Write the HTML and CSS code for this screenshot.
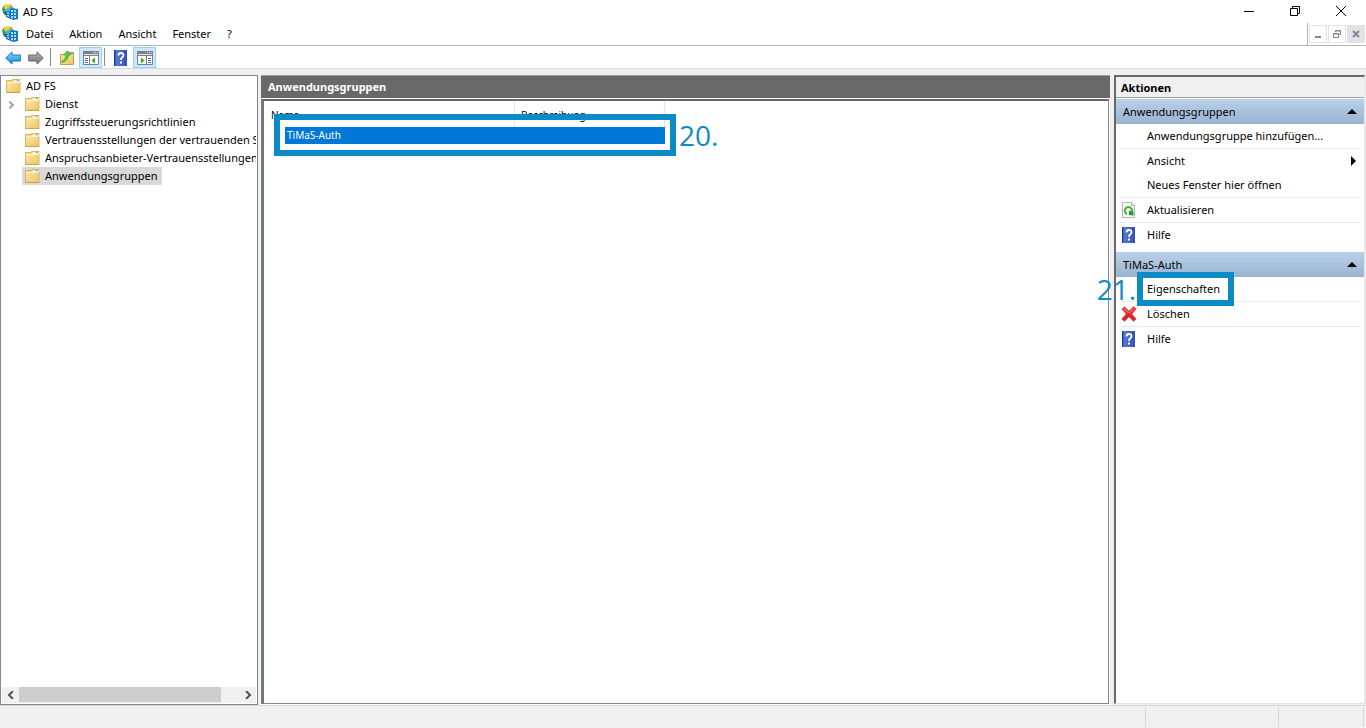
FILE: index.html
```html
<!DOCTYPE html>
<html lang="de">
<head>
    <meta charset="UTF-8">
    <meta name="viewport" content="width=device-width, initial-scale=1.0">
    <title>AD FS</title>
    <link rel="stylesheet" href="styles.css">
</head>
<body>

    <!-- Icons -->
    <svg class="sprite" aria-hidden="true">
        <defs>
            <linearGradient id="gFolder" x1="0" y1="0" x2="1" y2="1">
                <stop offset="0" stop-color="#ffebab"/>
                <stop offset="1" stop-color="#ebc566"/>
            </linearGradient>
            <linearGradient id="gBook" x1="0" y1="0" x2="1" y2="0">
                <stop offset="0" stop-color="#24449c"/>
                <stop offset="0.2" stop-color="#5478d8"/>
                <stop offset="1" stop-color="#2e50b4"/>
            </linearGradient>
            <linearGradient id="gBlue" x1="0" y1="0" x2="0" y2="1">
                <stop offset="0" stop-color="#8bdcff"/>
                <stop offset="1" stop-color="#0c84dc"/>
            </linearGradient>
            <linearGradient id="gGray" x1="0" y1="0" x2="0" y2="1">
                <stop offset="0" stop-color="#b4b4b4"/>
                <stop offset="1" stop-color="#747474"/>
            </linearGradient>
        </defs>
        <symbol id="adfs" viewBox="0 0 16 16">
            <circle cx="6" cy="6" r="5.500" fill="#4fb4e4"/>
            <path d="M0 5Q1 1 5 .5L6 3 4 5 4 8 1 8Z" fill="#3f9e46"/>
            <path d="M2.500 1.500Q5-.3 8 .6L8 3 5 4 4 6 2 4Z" fill="#f8cf3a"/>
            <path d="M1 8l3 0 2 4-2-.5Q1.500 10 1 8Z" fill="#12609e"/>
            <path d="M8 .6l2 1 1.500 3-3-1.500Z" fill="#e88a2c"/>
            <path d="M4 8l4-1V5l2-1 6 1v10l-5 1-7-3Z" fill="#1778be"/>
            <path d="M5 9l2-.5V13L5 12ZM9 6h2v2H9ZM12 6h2v2h-2ZM9 9h2v2H9ZM12 9h2v2h-2ZM9 12h2v2.500L9 14ZM12 12h2v2h-2Z" fill="#a4e2fb"/>
            <path d="M5 10.500h3" stroke="#1778be"/>
        </symbol>
        <symbol id="folder" viewBox="0 0 14 13">
            <path d="M.5 2V1.500h5L6.500.5h6.500v12H.5Z" fill="url(#gFolder)" stroke="#dcb562"/>
            <path d="M7 3.500h6V1H8Z" fill="#fff6d6"/>
            <path d="M10 1.500h2" stroke="#4aa6e8" fill="none"/>
            <path d="M1 3.500h6.500l1-1" stroke="#fff3c4" fill="none"/>
            <path d="M1 12.500h12" stroke="#cba24b"/>
        </symbol>
        <symbol id="back" viewBox="0 0 16 14">
            <path d="M.7 7L7 .9V4h8.300v6H7v3.100Z" fill="url(#gBlue)" stroke="#1873b8"/>
        </symbol>
        <symbol id="forward" viewBox="0 0 16 14">
            <path d="M15.300 7L9 .9V4H.7v6H9v3.100Z" fill="url(#gGray)" stroke="#686868"/>
        </symbol>
        <symbol id="up" viewBox="0 0 16 16">
            <path d="M1.500 4.500h5l1-2h7v12h-13Z" fill="url(#gFolder)" stroke="#c89d45"/>
            <path d="M11 3.500h3" stroke="#4aa6e8"/>
            <path d="M3 11Q7 10 7 5H4.500L8.500.8 12 5H9.500Q9 11 3 12.500Z" fill="#55cf3c" stroke="#2c9c25" stroke-width=".6"/>
        </symbol>
        <symbol id="paneleft" viewBox="0 0 16 14">
            <path d="M.5.5h15v13H.5Z" fill="#fff" stroke="#7d8086"/>
            <path d="M0 0h16v5H0Z" fill="#7d8086"/>
            <path d="M1 3.500h14M10 1.500h1M12 1.500h1M14 1.500h1" stroke="#e4e6e8"/>
            <path d="M6.500 5v9" stroke="#7d8086"/>
            <path d="M2 7.500h3M2 9.500h3M2 11.500h3" stroke="#3c6db4"/>
            <path d="M12 6.500v6L8.500 9.500Z" fill="#35ac2c"/>
        </symbol>
        <symbol id="paneright" viewBox="0 0 16 14">
            <path d="M.5.5h15v13H.5Z" fill="#fff" stroke="#7d8086"/>
            <path d="M0 0h16v5H0Z" fill="#7d8086"/>
            <path d="M1 3.500h14M10 1.500h1M12 1.500h1M14 1.500h1" stroke="#e4e6e8"/>
            <path d="M9.500 5v9" stroke="#7d8086"/>
            <path d="M11 7.500h3M11 9.500h3M11 11.500h3" stroke="#3c6db4"/>
            <path d="M4 6.500v6L7.500 9.500Z" fill="#35ac2c"/>
        </symbol>
        <symbol id="help" viewBox="0 0 13 16">
            <path d="M0 0h13v16H0Z" fill="url(#gBook)"/>
            <path d="M.5 0v16" stroke="#1c3a8c"/>
            <path d="M4.500 5.500Q4.500 3 7 3t2.500 2.200Q9.500 6.500 8 7.500 7 8.200 7 10" fill="none" stroke="#fff" stroke-width="1.800"/>
            <path d="M6 11.500h2v2H6Z" fill="#fff"/>
        </symbol>
        <symbol id="refresh" viewBox="0 0 13 16">
            <path d="M.5.5h9l3 3v12H.5Z" fill="#fafafa" stroke="#b4b4b4"/>
            <path d="M9.500.5v3h3" fill="#e2e2e2" stroke="#b4b4b4"/>
            <path d="M5 12.200A3.700 3.700 0 1 1 10 10" fill="none" stroke="#3cb031" stroke-width="2"/>
            <path d="M7 8.500L11.500 10V13.500L7 13Z" fill="#249b20"/>
        </symbol>
        <symbol id="delete" viewBox="0 0 16 16">
            <path d="M1 3L3.500.8 8 5.200 12.500.8 15.200 3 10.700 8 15.200 13 12.500 15.200 8 10.800 3.500 15.200.8 13 5.300 8Z" fill="#de2a2e" stroke="#b9181e" stroke-width=".6"/>
            <path d="M2 3l1.500-1.200L8 6.200l4.500-4.400L14 3 9.500 7h-3Z" fill="#ee6467"/>
        </symbol>
    </svg>

    <div class="window">
        <header class="titlebar">
            <svg class="icon16"><use href="#adfs"/></svg>
            <span class="title">AD FS</span>
            <button class="winbtn" aria-label="Minimieren"><svg width="12" height="12"><path d="M1 6.500h10" /></svg></button>
            <button class="winbtn" aria-label="Verkleinern"><svg width="12" height="12"><path d="M1.500 3.500h7v7h-7ZM3.500 3V1.500h7v7H9" /></svg></button>
            <button class="winbtn" aria-label="Schließen"><svg width="12" height="12"><path d="M1 1l10 10M11 1L1 11" /></svg></button>
        </header>

        <nav class="menubar">
            <svg class="icon16"><use href="#adfs"/></svg>
            <button>Datei</button>
            <button>Aktion</button>
            <button>Ansicht</button>
            <button>Fenster</button>
            <button>?</button>
            <div class="mdi">
                <button aria-label="Fenster minimieren"><svg width="10" height="10"><path d="M2 8h6" stroke-width="2"/></svg></button>
                <button aria-label="Fenster wiederherstellen"><svg width="10" height="10"><path d="M1.500 4.500h5v4h-5ZM1 5h6M3.500 3V1.500h5v4H7M3 2h6"/></svg></button>
                <button class="close" aria-label="Fenster schließen"><svg width="10" height="10"><path d="M2 2l6 6M8 2L2 8" stroke-width="2"/></svg></button>
            </div>
        </nav>

        <div class="toolbar">
            <button aria-label="Zurück"><svg width="16" height="14"><use href="#back"/></svg></button>
            <button aria-label="Vorwärts"><svg width="16" height="14"><use href="#forward"/></svg></button>
            <span class="divider"></span>
            <button aria-label="Nach oben"><svg width="16" height="16"><use href="#up"/></svg></button>
            <button class="on" aria-label="Konsolenstruktur"><svg width="16" height="14"><use href="#paneleft"/></svg></button>
            <span class="divider"></span>
            <button aria-label="Hilfe"><svg width="13" height="16"><use href="#help"/></svg></button>
            <button class="on" aria-label="Aktionsbereich"><svg width="16" height="14"><use href="#paneright"/></svg></button>
        </div>

        <main class="panes">
            <aside class="tree">
                <ul>
                    <li class="root"><svg><use href="#folder"/></svg>AD FS</li>
                    <li><i class="chevron"></i><svg><use href="#folder"/></svg>Dienst</li>
                    <li><svg><use href="#folder"/></svg>Zugriffssteuerungsrichtlinien</li>
                    <li><svg><use href="#folder"/></svg>Vertrauensstellungen der vertrauenden Seite</li>
                    <li><svg><use href="#folder"/></svg>Anspruchsanbieter-Vertrauensstellungen</li>
                    <li class="selected"><svg><use href="#folder"/></svg>Anwendungsgruppen</li>
                </ul>
                <div class="scrollbar">
                    <button aria-label="Nach links"><svg width="8" height="8"><path d="M6 0L2 4l4 4"/></svg></button>
                    <div class="track"><div class="thumb"></div></div>
                    <button aria-label="Nach rechts"><svg width="8" height="8"><path d="M2 0l4 4-4 4"/></svg></button>
                </div>
            </aside>

            <section class="content">
                <h1>Anwendungsgruppen</h1>
                <div class="list">
                    <table>
                        <thead>
                            <tr><th>Name</th><th>Beschreibung</th></tr>
                        </thead>
                        <tbody>
                            <tr><td>TiMaS-Auth</td><td></td></tr>
                        </tbody>
                    </table>
                    <div class="marker marker-row"><span>20.</span></div>
                </div>
            </section>

            <aside class="actions">
                <h2>Aktionen</h2>
                <div class="group">
                    <button class="grouphead">Anwendungsgruppen<i class="arrow-up"></i></button>
                    <button class="item">Anwendungsgruppe hinzufügen...</button>
                    <hr>
                    <button class="item">Ansicht<i class="arrow-right"></i></button>
                    <button class="item">Neues Fenster hier öffnen</button>
                    <hr>
                    <button class="item"><svg width="13" height="16"><use href="#refresh"/></svg>Aktualisieren</button>
                    <hr>
                    <button class="item"><svg width="13" height="16"><use href="#help"/></svg>Hilfe</button>
                </div>
                <div class="group">
                    <button class="grouphead">TiMaS-Auth<i class="arrow-up"></i></button>
                    <div class="marked">
                        <button class="item">Eigenschaften</button>
                        <div class="marker marker-item"><span>21.</span></div>
                    </div>
                    <hr>
                    <button class="item"><svg width="16" height="16"><use href="#delete"/></svg>Löschen</button>
                    <hr>
                    <button class="item"><svg width="13" height="16"><use href="#help"/></svg>Hilfe</button>
                </div>
            </aside>
        </main>

        <footer class="statusbar"><span></span><span></span><span></span></footer>
    </div>

</body>
</html>
```
FILE: styles.css
```css
* {
    box-sizing: border-box;
}
body {
    margin: 0;
    background-color: #f0f0f0;
    font-family: "Noto Sans", "Open Sans", sans-serif;
    font-size: 11px;
    line-height: 18px;
    color: black;
}
button {
    font: inherit;
    color: inherit;
    background: none;
    border: none;
    padding: 0;
    margin: 0;
}
svg {
    flex: none;
    display: block;
}
.sprite {
    position: absolute;
    width: 0;
    height: 0;
}
.icon16 {
    width: 16px;
    height: 16px;
}
.window {
    display: flex;
    flex-direction: column;
    height: 100vh;
}

/* Title bar */
.titlebar {
    display: flex;
    align-items: center;
    height: 23px;
    padding-left: 2px;
    background-color: white;
}
.title {
    flex: 1;
    padding-left: 5px;
}
.winbtn {
    display: flex;
    justify-content: center;
    width: 46px;
    padding-bottom: 2px;
}
.winbtn:last-child {
    margin-right: 2px;
}
.winbtn path {
    fill: none;
    stroke: black;
}

/* Menu */
.menubar {
    display: flex;
    align-items: center;
    height: 23px;
    padding-left: 2px;
    background-color: white;
    border-bottom: 1px solid #b0b3ba;
}
.menubar > button {
    padding: 0 8px;
}
.mdi {
    display: flex;
    align-items: center;
    gap: 1px;
    height: 22px;
    margin-left: auto;
    padding: 0 1px;
    border-left: 1px solid #b0b3ba;
}
.mdi button {
    display: flex;
    align-items: center;
    justify-content: center;
    width: 18px;
    height: 18px;
    border: 1px solid #e3e3e3;
}
.mdi .close {
    background-color: #e3e3e3;
}
.mdi path {
    fill: none;
    stroke: #7a8a9c;
}

/* Toolbar */
.toolbar {
    display: flex;
    align-items: center;
    height: 23px;
    padding-left: 1px;
    background-color: white;
    border-bottom: 1px solid #d9d9d9;
}
.toolbar button {
    display: flex;
    align-items: center;
    justify-content: center;
    width: 23px;
    height: 21px;
    margin-top: 1px;
}
.toolbar button + .on {
    margin-left: 1px;
}
.toolbar .on {
    background-color: #cce8ff;
    border: 1px solid #99d1ff;
}
.divider {
    width: 1px;
    height: 18px;
    margin: 0 4px 0 3px;
    background-color: #8c8c8c;
}
.on + .divider {
    margin-left: 2px;
}

/* Panes */
.panes {
    flex: 1;
    display: grid;
    grid-template-columns: 258px 1fr 251px;
    column-gap: 4px;
    min-height: 0;
    padding: 6px 1px 0 0;
}
.tree {
    display: flex;
    flex-direction: column;
    min-width: 0;
    padding: 1px;
    background-color: white;
    border: 1px solid #828790;
}
.tree ul {
    flex: 1;
    margin: 0;
    padding: 0;
    list-style: none;
    overflow: hidden;
}
.tree li {
    position: relative;
    display: flex;
    align-items: center;
    gap: 5px;
    width: max-content;
    height: 18px;
    margin-left: 20px;
    padding: 0 4px 0 3px;
    white-space: nowrap;
}
.tree li.root {
    margin-left: 1px;
}
.tree li svg {
    width: 15px;
    height: 14px;
}
.tree .selected {
    background-color: #d9d9d9;
}
.chevron {
    position: absolute;
    left: -15px;
    top: 7px;
    width: 6px;
    height: 6px;
    border-top: 2px solid #a6a6a6;
    border-right: 2px solid #a6a6a6;
    transform: rotate(45deg);
}
.scrollbar {
    display: flex;
    height: 16px;
    background-color: #f0f0f0;
}
.scrollbar button {
    display: flex;
    align-items: center;
    justify-content: center;
    width: 17px;
}
.scrollbar path {
    fill: none;
    stroke: #505050;
    stroke-width: 2;
}
.track {
    flex: 1;
}
.thumb {
    width: 92%;
    height: 15px;
    background-color: #cdcdcd;
}

/* Middle pane */
.content {
    display: flex;
    flex-direction: column;
    min-width: 0;
    margin: 0 0 0 -1px;
    padding-bottom: 1px;
}
h1, h2 {
    margin: 0;
    font-size: 11px;
    line-height: 22px;
}
h1 {
    margin-bottom: 1px;
    padding-left: 7px;
    color: white;
    background-color: #696969;
    border-top: 1px solid #a0a0a0;
}
.list {
    position: relative;
    flex: 1;
    margin-right: 1px;
    background-color: white;
    border: 1px solid #828790;
    border-width: 2px 1px 1px 3px;
    border-top-color: #696969;
    border-left-color: #757679;
    outline: 1px solid white;
}
table {
    width: 401px;
    table-layout: fixed;
    border-collapse: separate;
    border-spacing: 0;
}
th {
    height: 26px;
    padding: 1px 0 0 7px;
    font-size: 10px;
    font-weight: normal;
    text-align: left;
    border-right: 1px solid #e5e5e5;
}
th:first-child {
    width: 251px;
}
th:last-child {
    padding-left: 6px;
}
td {
    height: 17px;
    padding: 0;
    font-size: 10px;
    line-height: 17px;
    color: white;
    background-color: #0078d7;
}
td:first-child {
    padding-left: 21px;
    background-clip: content-box;
    text-indent: 2px;
}

/* Numbered step markers */
.marker {
    position: absolute;
    border: 6px solid #0d8bc6;
    pointer-events: none;
}
.marker span {
    position: absolute;
    top: 0;
    font-family: "Open Sans", "Noto Sans", sans-serif;
    font-size: 28px;
    line-height: 30px;
    color: #0d8bc6;
}
.marker-row {
    left: 10px;
    top: 13px;
    width: 402px;
    height: 42px;
}
.marker-row span {
    left: 100%;
    padding-left: 9px;
}
.marker-item {
    left: 21px;
    top: -5px;
    width: 97px;
    height: 34px;
}
.marker-item span {
    right: 100%;
    top: -4px;
    padding-right: 7px;
}

/* Actions pane */
.actions {
    min-width: 0;
    margin-bottom: 1px;
    background-color: white;
    border: 1px solid #e3e3e3;
    border-top: 2px solid #696969;
    border-left: 2px solid #696969;
}
h2 {
    height: 21px;
    margin-bottom: 1px;
    padding-left: 5px;
    background-color: #f0f0f0;
    border-bottom: 1px solid #a0a0a0;
}
.group {
    margin-bottom: 5px;
}
.grouphead {
    display: flex;
    align-items: center;
    justify-content: space-between;
    width: 100%;
    height: 25px;
    padding: 0 7px;
    background: linear-gradient(#b9d1ea, #99b4d1);
}
.arrow-up {
    border: 5px solid transparent;
    border-top: none;
    border-bottom-color: black;
}
.arrow-right {
    margin-left: auto;
    border: 5px solid transparent;
    border-right: none;
    border-left-color: black;
}
.item {
    position: relative;
    display: flex;
    align-items: center;
    width: 100%;
    height: 24px;
    padding: 0 8px 0 31px;
}
.item svg {
    position: absolute;
    left: 6px;
    top: 4px;
}
.item svg[width="16"] {
    left: 5px;
}
.marked {
    position: relative;
}
hr {
    height: 1px;
    margin: 0 4px;
    border: none;
    background-color: #ebebeb;
}

/* Status bar */
.statusbar {
    display: flex;
    justify-content: flex-end;
    height: 23px;
    padding: 1px 2px 1px 0;
    border-top: 1px solid #d7d7d7;
}
.statusbar span {
    border-right: 1px solid #d7d7d7;
}
.statusbar span:nth-child(2) {
    width: 133px;
}
.statusbar span:nth-child(3) {
    width: 85px;
}
```
